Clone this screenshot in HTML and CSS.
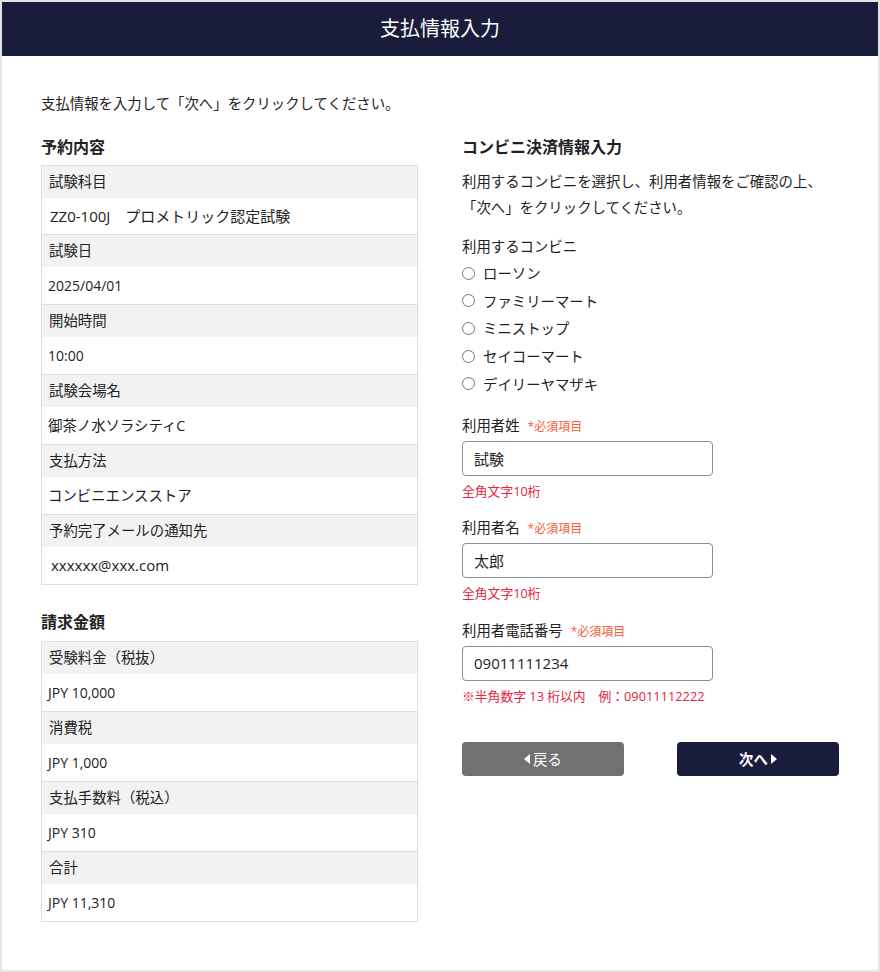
FILE: index.html
```html
<!DOCTYPE html>
<html lang="ja">
<head>
<meta charset="utf-8">
<title>支払情報入力</title>
<link rel="stylesheet" href="styles.css">
</head>
<body>
<div class="page">
  <header class="topbar"><h1 class="topbar-title">支払情報入力</h1></header>
  <main class="main">
    <p class="intro">支払情報を入力して「次へ」をクリックしてください。</p>
    <div class="columns">
      <section class="col">
        <h2 class="sec-title">予約内容</h2>
        <div class="info info-reserve">
          <div class="grp first">
            <div class="lbl">試験科目</div>
            <div class="val lg">ZZ0-100J　プロメトリック認定試験</div>
          </div>
          <div class="grp">
            <div class="lbl">試験日</div>
            <div class="val sm">2025/04/01</div>
          </div>
          <div class="grp">
            <div class="lbl">開始時間</div>
            <div class="val sm">10:00</div>
          </div>
          <div class="grp">
            <div class="lbl">試験会場名</div>
            <div class="val">御茶ノ水ソラシティC</div>
          </div>
          <div class="grp">
            <div class="lbl">支払方法</div>
            <div class="val">コンビニエンスストア</div>
          </div>
          <div class="grp">
            <div class="lbl">予約完了メールの通知先</div>
            <div class="val lg mail">xxxxxx@xxx.com</div>
          </div>
        </div>

        <h2 class="sec-title second">請求金額</h2>
        <div class="info">
          <div class="grp first">
            <div class="lbl">受験料金（税抜）</div>
            <div class="val sm">JPY 10,000</div>
          </div>
          <div class="grp">
            <div class="lbl">消費税</div>
            <div class="val sm">JPY 1,000</div>
          </div>
          <div class="grp">
            <div class="lbl">支払手数料（税込）</div>
            <div class="val sm">JPY 310</div>
          </div>
          <div class="grp">
            <div class="lbl">合計</div>
            <div class="val sm">JPY 11,310</div>
          </div>
        </div>
      </section>

      <section class="col">
        <h2 class="sec-title">コンビニ決済情報入力</h2>
        <p class="desc">利用するコンビニを選択し、利用者情報をご確認の上、<br>「次へ」をクリックしてください。</p>
        <div class="store-label">利用するコンビニ</div>
        <div class="radios">
          <label class="radio"><input type="radio" name="store">ローソン</label>
          <label class="radio"><input type="radio" name="store">ファミリーマート</label>
          <label class="radio"><input type="radio" name="store">ミニストップ</label>
          <label class="radio"><input type="radio" name="store">セイコーマート</label>
          <label class="radio"><input type="radio" name="store">デイリーヤマザキ</label>
        </div>

        <div class="field f1">
          <div class="field-label">利用者姓<span class="req">*必須項目</span></div>
          <input class="text-input" type="text" value="試験">
          <div class="hint">全角文字10桁</div>
        </div>
        <div class="field f2">
          <div class="field-label">利用者名<span class="req">*必須項目</span></div>
          <input class="text-input" type="text" value="太郎">
          <div class="hint">全角文字10桁</div>
        </div>
        <div class="field f3">
          <div class="field-label">利用者電話番号<span class="req">*必須項目</span></div>
          <input class="text-input" type="text" value="09011111234">
          <div class="hint">※半角数字 13 桁以内　例：09011112222</div>
        </div>

        <div class="actions">
          <button class="btn btn-back" type="button"><svg class="tri" width="6" height="10" viewBox="0 0 6 10"><polygon points="6,0 6,10 0,5" fill="#fff"/></svg>戻る</button>
          <button class="btn btn-next" type="button">次へ<svg class="tri" width="6" height="10" viewBox="0 0 6 10"><polygon points="0,0 6,5 0,10" fill="#fff"/></svg></button>
        </div>
      </section>
    </div>
  </main>
</div>
</body>
</html>
```

FILE: styles.css
```css
html, body {
  margin: 0;
  padding: 0;
}
body {
  background: #e4e4e4;
  padding: 2px;
  font-family: "Open Sans", "Noto Sans CJK JP", sans-serif;
  color: #222;
  font-size: 14.4px;
  line-height: 1.5;
}
.page {
  background: #fff;
  min-height: 968px;
  box-sizing: border-box;
}
.topbar {
  background: #191c3b;
  height: 54px;
  display: flex;
  align-items: center;
  justify-content: center;
}
.topbar-title {
  margin: 0;
  color: #fff;
  font-size: 20px;
  font-weight: normal;
  line-height: 54px;
}
.main {
  padding: 37px 39px 40px 39px;
}
.intro {
  margin: 0 0 20px 0;
  line-height: 21.6px;
}
.columns {
  display: grid;
  grid-template-columns: 377px 377px;
  column-gap: 44px;
  align-items: start;
}
.sec-title {
  margin: 0 0 6px 0;
  font-size: 16px;
  font-weight: bold;
  line-height: 24px;
}
.sec-title.second {
  margin-top: 25px;
  margin-bottom: 7px;
}
.info {
  border: 1px solid #dedede;
}
.grp {
  border-top: 1px solid #dedede;
}
.grp.first {
  border-top: 0;
}
.lbl {
  background: #f2f2f2;
  height: 32px;
  line-height: 32px;
  padding: 0 7px;
  font-size: 14.4px;
}
.val {
  height: 37px;
  line-height: 37px;
  padding: 0 6px;
  font-size: 14.4px;
}
.info-reserve .grp.first .val {
  height: 36px;
  line-height: 36px;
}
.val.sm {
  font-size: 14px;
}
.val.lg {
  font-size: 15px;
  padding-left: 8px;
}
.val.mail {
  padding-left: 9px;
}
.desc {
  margin: 10px 0 0 0;
  line-height: 26px;
}
.store-label {
  margin-top: 13px;
  line-height: 26px;
}
.radios {
  display: flex;
  flex-direction: column;
  padding-top: 1px;
}
.radio {
  height: 27.6px;
  display: flex;
  align-items: center;
  line-height: 1;
}
.radio input {
  width: 13px;
  height: 13px;
  margin: 0 8px 2px 0;
}
.field.f1 {
  margin-top: 16px;
}
.field.f2 {
  margin-top: 17px;
}
.field.f3 {
  margin-top: 18px;
}
.field-label {
  line-height: 22px;
}
.req {
  color: #f55b3a;
  font-size: 12px;
  margin-left: 8px;
}
.text-input {
  display: block;
  box-sizing: border-box;
  width: 251px;
  height: 35px;
  margin-top: 3px;
  border: 1px solid #8c8c8c;
  border-radius: 4px;
  padding: 0 11px;
  font-family: inherit;
  font-size: 15px;
  color: #222;
  background: #fff;
}
.hint {
  margin-top: 6px;
  font-size: 12.8px;
  line-height: 18px;
  color: #e5243f;
}
.actions {
  margin-top: 37px;
  display: flex;
  justify-content: space-between;
}
.btn {
  width: 162px;
  height: 34px;
  border: 0;
  border-radius: 4px;
  color: #fff;
  font-family: inherit;
  font-size: 14.4px;
  display: flex;
  align-items: center;
  justify-content: center;
  gap: 3px;
  padding: 0;
}
.btn-back {
  background: #717171;
}
.btn-next {
  background: #191c3b;
  font-weight: bold;
}
.tri {
  display: block;
}
```
